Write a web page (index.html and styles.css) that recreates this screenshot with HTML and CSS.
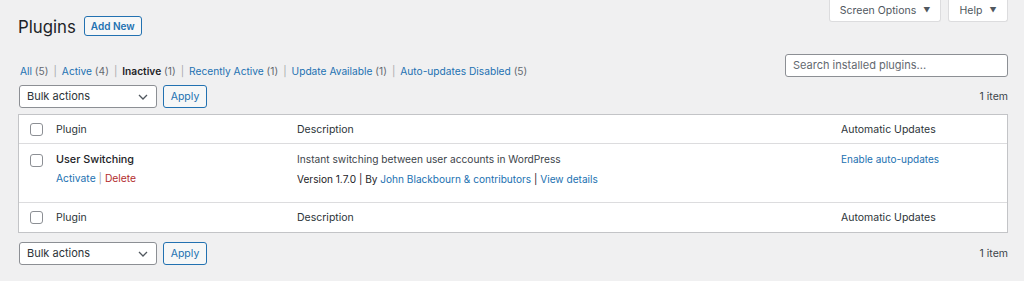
FILE: index.html
```html
<!DOCTYPE html>
<html>
<head>
<meta charset="utf-8">
<link rel="stylesheet" href="styles.css">
</head>
<body>
<div class="screen-meta">
  <button class="meta-tab">Screen Options <span class="tri">▼</span></button>
  <button class="meta-tab help">Help <span class="tri">▼</span></button>
</div>
<div class="wrap">
  <div class="title-row">
    <h1>Plugins</h1>
    <a class="add-new">Add New</a>
  </div>
  <div class="subsub-row">
    <ul class="subsubsub">
      <li><a>All</a> <span class="count">(5)</span><span class="sep">|</span></li>
      <li><a>Active</a> <span class="count">(4)</span><span class="sep">|</span></li>
      <li><a class="current">Inactive</a> <span class="count">(1)</span><span class="sep">|</span></li>
      <li><a>Recently Active</a> <span class="count">(1)</span><span class="sep">|</span></li>
      <li><a>Update Available</a> <span class="count">(1)</span><span class="sep">|</span></li>
      <li><a>Auto-updates Disabled</a> <span class="count">(5)</span></li>
    </ul>
    <div class="search">Search installed plugins...</div>
  </div>
  <div class="tablenav">
    <div class="actions">
      <div class="select">Bulk actions
        <svg class="chev" width="10" height="6" viewBox="0 0 10 6"><path d="M1 1l4 4 4-4" fill="none" stroke="#50575e" stroke-width="1.3"/></svg>
      </div>
      <button class="apply">Apply</button>
    </div>
    <div class="items">1 item</div>
  </div>
  <div class="table">
    <div class="row head">
      <div class="cb"><span class="check"></span></div>
      <div class="cell">Plugin</div>
      <div class="cell">Description</div>
      <div class="cell">Automatic Updates</div>
    </div>
    <div class="row body">
      <div class="cb"><span class="check"></span></div>
      <div class="cell">
        <div class="pname">User Switching</div>
        <div class="row-actions"><a>Activate</a> <span class="pipe">|</span> <a class="del">Delete</a></div>
      </div>
      <div class="cell desc">
        <div>Instant switching between user accounts in WordPress</div>
        <div class="meta">Version 1.7.0 | By <a>John Blackbourn &amp; contributors</a> | <a>View details</a></div>
      </div>
      <div class="cell auto"><a>Enable auto-updates</a></div>
    </div>
    <div class="row foot">
      <div class="cb"><span class="check"></span></div>
      <div class="cell">Plugin</div>
      <div class="cell">Description</div>
      <div class="cell">Automatic Updates</div>
    </div>
  </div>
  <div class="tablenav bottom">
    <div class="actions">
      <div class="select">Bulk actions
        <svg class="chev" width="10" height="6" viewBox="0 0 10 6"><path d="M1 1l4 4 4-4" fill="none" stroke="#50575e" stroke-width="1.3"/></svg>
      </div>
      <button class="apply">Apply</button>
    </div>
    <div class="items">1 item</div>
  </div>
</div>
</body>
</html>
```

FILE: styles.css
```css
* { box-sizing: border-box; }
html, body { margin: 0; padding: 0; }
body {
  background: #f0f0f1;
  font-family: Inter, "Noto Sans", "Liberation Sans", sans-serif;
  font-size: 10.3px;
  color: #3c434a;
  width: 1024px;
  height: 281px;
  overflow: hidden;
  position: relative;
}
a { color: #2271b1; text-decoration: none; }

.screen-meta {
  position: absolute;
  top: 0;
  right: 16px;
  display: flex;
  gap: 7px;
}
.meta-tab {
  font: inherit;
  font-size: 10.5px;
  color: #50575e;
  background: #fff;
  border: 1px solid #dcdcde;
  border-top: none;
  border-radius: 0 0 3px 3px;
  height: 22px;
  width: 112px;
  padding: 0;
}
.meta-tab.help { width: 60px; }
.tri { font-size: 7px; margin-left: 4px; position: relative; top: -1px; }

.wrap { padding: 0 16px 0 18px; }

.title-row {
  display: flex;
  align-items: center;
  padding-top: 16px;
  height: 36px;
}
h1 {
  margin: 0;
  font-size: 16.8px;
  font-weight: 400;
  color: #1d2327;
  line-height: 20px;
  position: relative;
  top: 1px;
}
.add-new {
  margin-left: 8px;
  border: 1px solid #2271b1;
  border-radius: 3px;
  background: #f6f7f7;
  font-weight: 600;
  font-size: 10px;
  height: 20px;
  line-height: 18px;
  padding: 0 6px;
}

.subsub-row {
  display: flex;
  justify-content: space-between;
  align-items: center;
  margin-top: 18px;
  height: 23px;
}
.subsubsub {
  list-style: none;
  margin: 0;
  padding: 0 0 0 2px;
  display: flex;
  color: #646970;
  position: relative;
  top: 5px;
  font-size: 10.2px;
}
.subsubsub .current { color: #1d2327; font-weight: 600; }
.sep { margin: 0 5px; color: #a7aaad; }

.search {
  width: 223px;
  height: 23px;
  border: 1px solid #8c8f94;
  border-radius: 3px;
  background: #fff;
  color: #646970;
  font-size: 11px;
  padding: 0 7px;
  line-height: 21px;
}

.tablenav {
  display: flex;
  justify-content: space-between;
  align-items: center;
  margin-top: 8px;
  height: 23px;
  padding-left: 1px;
}
.tablenav.bottom { margin-top: 9px; }
.actions { display: flex; gap: 6px; }
.select {
  width: 138px;
  height: 23px;
  border: 1px solid #8c8f94;
  border-radius: 3px;
  background: #fff;
  color: #2c3338;
  font-size: 11px;
  padding: 0 7px;
  line-height: 21px;
  display: flex;
  justify-content: space-between;
  align-items: center;
}
.chev { margin-right: 1px; }
.apply {
  font: inherit;
  font-size: 10.5px;
  color: #2271b1;
  border: 1px solid #2271b1;
  border-radius: 3px;
  background: #f6f7f7;
  height: 23px;
  width: 44px;
  padding: 0;
}
.items { color: #3c434a; font-size: 10.5px; }

.table {
  margin-top: 6px;
  background: #fff;
  border: 1px solid #c3c4c7;
}
.row {
  display: grid;
  grid-template-columns: 37px 241px 544px 1fr;
}
.row.head { height: 29px; border-bottom: 1px solid #dcdcde; align-items: center; color: #2c3338; font-size: 10.5px; padding-top: 1px; }
.row.foot { height: 30px; border-top: 1px solid #dcdcde; align-items: center; color: #2c3338; font-size: 10.5px; }
.row.body { height: 58px; }
.cb { display: flex; justify-content: flex-start; padding-left: 11px; }
.check {
  width: 13px;
  height: 13px;
  border: 1px solid #8c8f94;
  border-radius: 3px;
  background: #fff;
  display: block;
}
.row.body .cb { padding-top: 10px; }
.row.body .cell { padding-top: 9px; }
.pname { font-size: 10.8px; font-weight: 500; color: #1d2327; }
.row-actions { margin-top: 6px; font-size: 10.3px; }
.pipe { color: #a7aaad; }
.del { color: #b32d2e; }
.desc { font-size: 10.2px; color: #3c434a; }
.desc .meta { margin-top: 8px; color: #1d2327; font-size: 10.1px; }
.auto { font-size: 10px; }
```
